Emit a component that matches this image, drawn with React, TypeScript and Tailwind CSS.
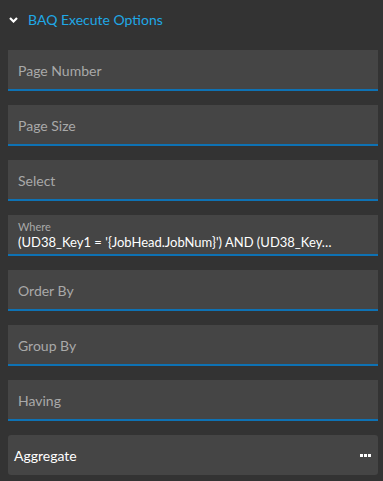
const fields = ['Page Number', 'Page Size', 'Select'];
const moreFields = ['Order By', 'Group By', 'Having'];

function Field({ label }: { label: string }) {
  return (
    <div className="flex h-[41px] items-center border-b-2 border-[#0e72b4] bg-[#454545] px-[10px] pt-[2px]">
      <span className="text-[14px] text-[#a9a9a9]">{label}</span>
    </div>
  );
}

export default function App() {
  return (
    <div
      className="h-[481px] w-[383px] bg-[#333333] text-white"
      style={{ fontFamily: 'Lato, "Open Sans", sans-serif' }}
    >
      <div className="flex h-[38px] items-center gap-[10px] pl-[9px] pt-[1px]">
        <svg width="9" height="6" viewBox="0 0 9 6" className="shrink-0">
          <polyline points="1,1 4.5,4.5 8,1" fill="none" stroke="white" strokeWidth="2.2" />
        </svg>
        <span className="text-[14px] text-[#20a8e6]">BAQ Execute Options</span>
      </div>
      <div className="flex flex-col gap-[14px] pl-[8px] pr-[5px] pt-[12px]">
        {fields.map((f) => (
          <Field key={f} label={f} />
        ))}
        <div className="flex h-[41px] flex-col justify-center border-b-2 border-[#0e72b4] bg-[#454545] px-[10px] pt-[1px]">
          <span className="text-[11px] leading-[13px] text-[#a9a9a9]">Where</span>
          <span className="whitespace-nowrap text-[13px] leading-[18px] text-white">
            (UD38_Key1 = '{'{'}JobHead.JobNum{'}'}') AND (UD38_Key…
          </span>
        </div>
        {moreFields.map((f) => (
          <Field key={f} label={f} />
        ))}
        <div className="flex h-[40px] items-center justify-between rounded-[3px] bg-[#454545] pl-[6px] pr-[7px]">
          <span className="text-[14px] text-white">Aggregate</span>
          <div className="flex gap-[1px]">
            <span className="h-[3px] w-[3px] bg-white" />
            <span className="h-[3px] w-[3px] bg-white" />
            <span className="h-[3px] w-[3px] bg-white" />
          </div>
        </div>
      </div>
    </div>
  );
}
